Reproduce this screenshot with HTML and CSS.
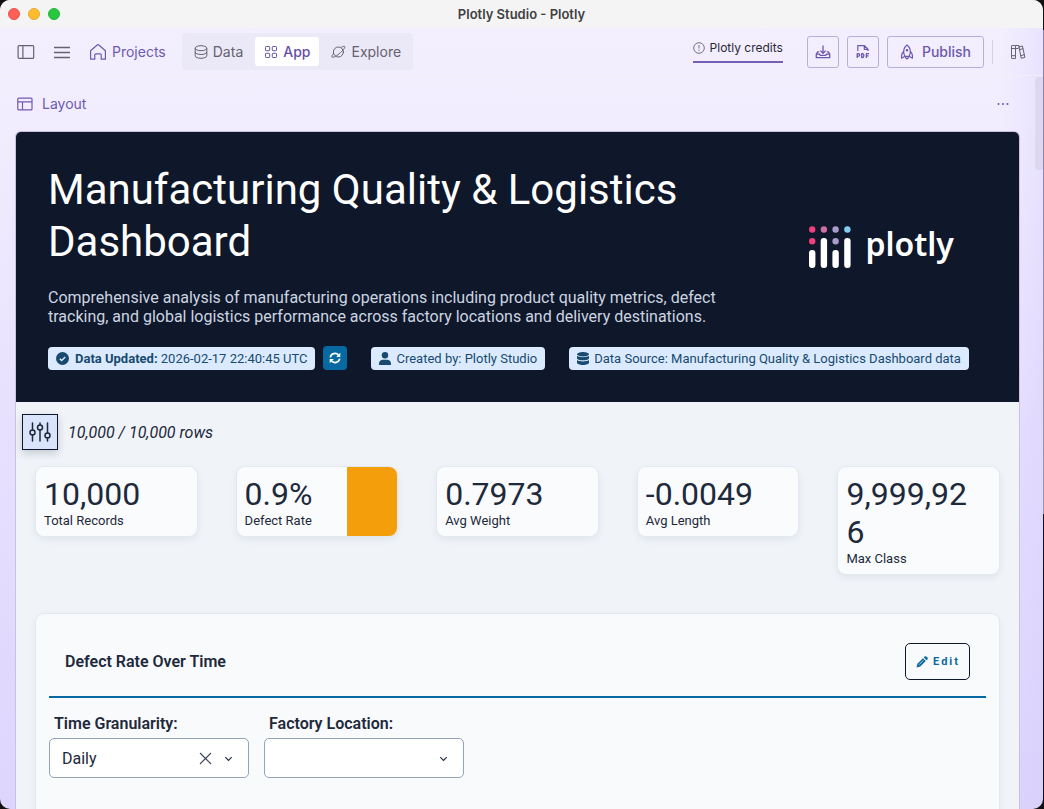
FILE: index.html
```html
<!DOCTYPE html>
<html lang="en">
<head>
<meta charset="utf-8">
<title>Plotly Studio - Plotly</title>
<link rel="stylesheet" href="styles.css">
</head>
<body>
<div class="window">
  <header class="titlebar">
    <div class="lights">
      <span class="light light-close"></span>
      <span class="light light-min"></span>
      <span class="light light-max"></span>
    </div>
    <div class="window-title">Plotly Studio - Plotly</div>
  </header>

  <nav class="toolbar">
    <button class="icon-btn" aria-label="Toggle sidebar">
      <svg width="18" height="16" viewBox="0 0 18 16" fill="none" stroke="currentColor" stroke-width="1.2"><rect x="1.1" y="1.6" width="15.6" height="12.8" rx="1"/><path d="M5.9 1.6v12.8"/></svg>
    </button>
    <button class="icon-btn" aria-label="Menu">
      <svg width="16" height="14" viewBox="0 0 16 14" fill="none" stroke="currentColor" stroke-width="1.6"><path d="M0 2.500h16M0 7.500h16M0 12.500h16"/></svg>
    </button>
    <a class="projects" href="#">
      <svg width="18" height="18" viewBox="0 0 18 18" fill="none" stroke="currentColor" stroke-width="1.2" stroke-linejoin="round" stroke-linecap="round"><path d="M1.600 7.800 8.200 2a1.200 1.200 0 0 1 1.600 0l6.600 5.800v8.400h-4.200v-4.400a1 1 0 0 0-1-1H6.800a1 1 0 0 0-1 1v4.400H1.600z"/></svg>
      Projects
    </a>
    <div class="tabs">
      <button class="tab">
        <svg width="14" height="14" viewBox="0 0 14 14" fill="none" stroke="currentColor" stroke-width="1"><ellipse cx="7" cy="3.200" rx="5.800" ry="2.500"/><path d="M1.200 3.200v7.600c0 1.400 2.600 2.500 5.800 2.500s5.800-1.100 5.800-2.500V3.200M1.200 7c0 1.400 2.600 2.500 5.800 2.500s5.800-1.100 5.800-2.500"/></svg>
        Data
      </button>
      <button class="tab tab-active">
        <svg width="14" height="14" viewBox="0 0 14 14" fill="none" stroke="currentColor" stroke-width="1"><rect x="1.500" y="1.500" width="4.200" height="4.200" rx=".8"/><rect x="8.300" y="1.500" width="4.200" height="4.200" rx=".8"/><rect x="1.500" y="8.300" width="4.200" height="4.200" rx=".8"/><rect x="8.300" y="8.300" width="4.200" height="4.200" rx=".8"/></svg>
        App
      </button>
      <button class="tab">
        <svg width="15" height="14" viewBox="0 0 15 14" fill="none" stroke="currentColor" stroke-width="1" stroke-linecap="round"><circle cx="7.400" cy="7" r="5"/><path d="M2.600 8.300C1.200 10 .4 11.400.9 12c.8 1 4-.6 7.200-3.200s6-6 5.800-7c-.2-.8-1.800-.5-3.300.3"/></svg>
        Explore
      </button>
    </div>
    <div class="toolbar-right">
      <a class="credits" href="#">
        <svg width="12" height="12" viewBox="0 0 12 12" fill="none" stroke="currentColor" stroke-width=".9"><circle cx="6" cy="6" r="5.300"/><path d="M6 3v3.600M6 7.800v1.200"/></svg>
        Plotly credits
      </a>
      <div class="actions">
        <button class="outline-btn square" aria-label="Download">
          <svg width="16" height="16" viewBox="0 0 16 16" fill="none" stroke="currentColor" stroke-width="1.300" stroke-linejoin="round"><path d="M8 1.500v7.600M5.300 6.600 8 9.200l2.700-2.600M4.200 7.800H2.700L1.300 10v3.700h13.400V10l-1.400-2.200h-1.500M1.300 10.200h3.200l.8 1.200h5.400l.8-1.200h3.200"/></svg>
        </button>
        <button class="outline-btn square" aria-label="Export PDF">
          <svg width="14" height="16" viewBox="0 0 14 16" fill="none" stroke="currentColor" stroke-width="1.200" stroke-linejoin="round"><path d="M1.800 7V1.700h6.700L12 5.100V7M8.300 1.700v3.600H12"/><path stroke-width="1.300" d="M1.200 14V9.700h1.200a1.200 1.200 0 0 1 0 2.500H1.200M5.700 9.700v3.800h.8c1.800 0 1.800-3.800 0-3.800zM10.400 14V9.700H13M10.400 11.900h2.100"/></svg>
        </button>
        <button class="outline-btn publish">
          <svg width="14" height="16" viewBox="0 0 14 16" fill="none" stroke="currentColor" stroke-width="1.200" stroke-linejoin="round"><path d="M7 1C4.700 2.700 3.700 5.200 3.700 7.500c0 2 .5 3.600 1.200 4.800h4.200c.7-1.200 1.200-2.800 1.200-4.800C10.300 5.200 9.300 2.700 7 1zM3.700 7.500C2 8.800 1.200 10.500 1.600 14.200l3.300-1.900M10.300 7.500c1.700 1.300 2.500 3 2.100 6.700l-3.300-1.900M5.600 12.300v1.500L7 15l1.400-1.200v-1.500"/><circle cx="7" cy="6.300" r=".7"/></svg>
          Publish
        </button>
      </div>
      <span class="divider"></span>
      <button class="icon-btn" aria-label="Library">
        <svg width="16" height="16" viewBox="0 0 16 16" fill="none" stroke="currentColor" stroke-width="1"><rect x="1.500" y="1.500" width="4" height="13" rx=".6"/><path d="M5.500 4.500V1.500H9v3M5.500 11.700v2.800M5.500 4.500h2.700M9 2.900l3.400-.9 2.500 11.400-3.700.9zM1.500 4.500h4M1.500 11.700h4M9.500 5.600l3.700-.9M10.700 11.600l3.800-.9"/></svg>
      </button>
    </div>
  </nav>

  <main class="workspace">
    <div class="layout-row">
      <button class="layout-btn">
        <svg width="16" height="14" viewBox="0 0 16 14" fill="none" stroke="currentColor" stroke-width="1.200"><rect x=".8" y="1.100" width="14.200" height="11.800" rx="1"/><path d="M.8 4.900H15M5.500 4.900v8"/></svg>
        Layout
      </button>
      <button class="more" aria-label="More options">
        <svg width="12" height="4" viewBox="0 0 12 4" fill="currentColor"><circle cx="1.500" cy="2" r="1"/><circle cx="6" cy="2" r="1"/><circle cx="10.500" cy="2" r="1"/></svg>
      </button>
    </div>

    <section class="app">
      <header class="hero">
        <div class="hero-top">
          <div class="hero-text">
            <h1>Manufacturing Quality &amp; Logistics Dashboard</h1>
            <p>Comprehensive analysis of manufacturing operations including product quality metrics, defect tracking, and global logistics performance across factory locations and delivery destinations.</p>
          </div>
          <div class="logo">
            <svg width="42" height="42" viewBox="0 0 42 42">
              <g fill="#fff"><rect x="0" y="24" width="6.400" height="18" rx="3"/><rect x="11.700" y="12" width="6.400" height="30" rx="3"/><rect x="23.400" y="24" width="6.400" height="18" rx="3"/><rect x="35.200" y="12" width="6.400" height="30" rx="3"/></g>
              <g fill="#ef3f7d"><circle cx="3.200" cy="3.500" r="3.200"/><circle cx="3.200" cy="15.300" r="3.200"/></g>
              <circle cx="14.900" cy="3.500" r="3.200" fill="#cf6da6"/>
              <g fill="#a99bcb"><circle cx="26.600" cy="3.500" r="3.200"/><circle cx="26.600" cy="15.300" r="3.200"/></g>
              <circle cx="38.400" cy="3.500" r="3.200" fill="#83cdf0"/>
            </svg>
            <span>plotly</span>
          </div>
        </div>
        <div class="badges">
          <div class="badge-group">
            <span class="badge">
              <svg width="14" height="13" viewBox="0 0 14 13"><circle cx="6.500" cy="6.500" r="6.500" fill="currentColor"/><path d="m3.800 6.700 1.900 1.900 3.500-3.700" fill="none" stroke="#dbeafe" stroke-width="1.400"/></svg>
              <span><strong>Data Updated:</strong> 2026-02-17 22:40:45 UTC</span>
            </span>
            <button class="refresh" aria-label="Refresh data">
              <svg width="12" height="12" viewBox="0 0 12 12" fill="none" stroke="#fff" stroke-width="1.700"><path d="M1.300 5.300a4.700 4.700 0 0 1 8.300-2.100M10.700 6.700a4.700 4.700 0 0 1-8.300 2.100"/><path d="M11.300.8v4.100H7.200zM.7 11.200V7.100h4.100z" fill="#fff" stroke="none"/></svg>
            </button>
          </div>
          <span class="badge">
            <svg width="12" height="13" viewBox="0 0 12 13" fill="currentColor"><circle cx="6" cy="3.300" r="3.200"/><path d="M0 13v-1.500C0 9 1.800 7.700 4 7.700h4c2.200 0 4 1.300 4 3.800V13z"/></svg>
            Created by: Plotly Studio
          </span>
          <span class="badge">
            <svg width="12" height="13" viewBox="0 0 12 13" fill="currentColor"><ellipse cx="6" cy="2.200" rx="6" ry="2.200"/><path d="M0 3.800c1.200 1 3.500 1.400 6 1.400s4.800-.4 6-1.400v2.400c0 1.200-2.700 2.100-6 2.100S0 7.400 0 6.200zM0 8c1.200 1 3.500 1.400 6 1.400S10.800 9 12 8v2.800C12 12 9.300 13 6 13s-6-1-6-2.200z"/></svg>
            Data Source: Manufacturing Quality &amp; Logistics Dashboard data
          </span>
        </div>
      </header>

      <div class="filter-row">
        <button class="filter-btn" aria-label="Filters">
          <svg width="22" height="20" viewBox="0 0 22 20" fill="none" stroke="currentColor" stroke-width="1.500" stroke-linecap="round"><path d="M3.500 1v7M3.500 13v6M11 1v2M11 8v11M18.500 1v10M18.500 16v3"/><circle cx="3.500" cy="10.500" r="2.500"/><circle cx="11" cy="5.500" r="2.500"/><circle cx="18.500" cy="13.500" r="2.500"/></svg>
        </button>
        <em>10,000 / 10,000 rows</em>
      </div>

      <div class="kpis">
        <article class="kpi"><div class="kpi-body"><div class="value">10,000</div><div class="label">Total Records</div></div></article>
        <article class="kpi"><div class="kpi-body"><div class="value">0.9%</div><div class="label">Defect Rate</div></div><div class="flag"></div></article>
        <article class="kpi"><div class="kpi-body"><div class="value">0.7973</div><div class="label">Avg Weight</div></div></article>
        <article class="kpi"><div class="kpi-body"><div class="value">-0.0049</div><div class="label">Avg Length</div></div></article>
        <article class="kpi"><div class="kpi-body"><div class="value">9,999,926</div><div class="label">Max Class</div></div></article>
      </div>

      <section class="chart-card">
        <header class="chart-head">
          <h2>Defect Rate Over Time</h2>
          <button class="edit">
            <svg width="12" height="12" viewBox="0 0 12 12" fill="currentColor"><path d="M7 2.200 9.800 5l-5.600 5.600L.5 11.500l.9-3.700zM7.800 1.400l.8-.8a1.300 1.300 0 0 1 1.800 0l1 1a1.300 1.300 0 0 1 0 1.800l-.8.8z"/><path d="m3 8.700 4.300-4.300" stroke="#f8fafc" stroke-width=".7"/></svg>
            Edit
          </button>
        </header>
        <div class="controls">
          <div class="field">
            <label for="granularity">Time Granularity:</label>
            <div class="select-wrap">
              <select id="granularity"><option>Daily</option></select>
              <button class="clear" aria-label="Clear selection"><svg width="13" height="13" viewBox="0 0 13 13" fill="none" stroke="currentColor" stroke-width="1.100"><path d="m1 1 11 11M12 1 1 12"/></svg></button>
              <svg class="chevron" width="9" height="6" viewBox="0 0 9 6" fill="none" stroke="currentColor" stroke-width="1.100"><path d="m1.300 1.200 3.200 3.200 3.200-3.200"/></svg>
            </div>
          </div>
          <div class="field">
            <label for="location">Factory Location:</label>
            <div class="select-wrap">
              <select id="location"><option></option></select>
              <svg class="chevron" width="9" height="6" viewBox="0 0 9 6" fill="none" stroke="currentColor" stroke-width="1.100"><path d="m1.300 1.200 3.200 3.200 3.200-3.200"/></svg>
            </div>
          </div>
        </div>
      </section>
    </section>
    <div class="scroll-thumb"></div>
  </main>
</div>
</body>
</html>
```
FILE: styles.css
```css
* { box-sizing: border-box; }

body {
  margin: 0;
  padding-right: 1px;
  background: linear-gradient(#111 0 30px, #8d7fae 30px, #9a96a6 514px, #111 514px);
  font-family: Roboto, "Liberation Sans", sans-serif;
  color: #1e293b;
}

button {
  margin: 0;
  padding: 0;
  border: 0;
  background: none;
  font: inherit;
  color: inherit;
}

a { color: inherit; text-decoration: none; }
svg { display: block; flex: none; }

.window {
  display: flex;
  flex-direction: column;
  height: 100vh;
  overflow: hidden;
  border-radius: 10px;
  background:
    linear-gradient(to right, transparent 96%, rgba(205, 195, 255, 0.25)),
    linear-gradient(#f3effe 0, #f1edfe 130px, #e8e1fe 400px, #ddd5fd 100%);
}

.titlebar {
  display: grid;
  grid-template-columns: 1fr auto 1fr;
  align-items: center;
  flex: none;
  height: 28px;
  padding: 0 8px;
  background: #f5f4f4;
}

.lights { display: flex; gap: 8px; }
.light { width: 12px; height: 12px; border-radius: 50%; }
.light-close { background: #fe5f57; border: 1px solid #e8524c; }
.light-min { background: #febc2e; border: 1px solid #e6a935; }
.light-max { background: #27c840; border: 1px solid #24b23b; }

.window-title {
  font: 600 13px/16px Inter, sans-serif;
  color: #3f3f41;
}

.toolbar {
  display: flex;
  align-items: center;
  flex: none;
  gap: 19px;
  height: 48px;
  padding: 0 17px;
  border-bottom: 1px solid #f3edf6;
  font: 400 14px/20px Inter, sans-serif;
  color: #66626f;
}

.projects {
  display: flex;
  align-items: center;
  gap: 5px;
  color: #6e5aaf;
}

.tabs {
  display: flex;
  margin-left: -3px;
  padding: 4px;
  border-radius: 4px;
  background: #ebe8f7;
}

.tab {
  display: flex;
  align-items: center;
  gap: 5px;
  height: 29px;
  padding: 0 8px;
  border-radius: 3px;
}
.tab:first-child { padding-right: 12px; }
.tab:last-child { padding-left: 12px; }
.tab-active { padding: 0 9px; font-weight: 500; color: #6450a8; background: #fff; }

.toolbar-right {
  display: flex;
  align-items: center;
  margin-left: auto;
}

.credits {
  display: flex;
  align-items: center;
  gap: 5px;
  margin: 0 24px 2px 0;
  padding-bottom: 3px;
  border-bottom: 2px solid #7460b5;
  font-size: 12px;
  line-height: 20px;
  color: #2b2833;
}
.credits svg { color: #66626f; }

.actions { display: flex; gap: 8px; }

.outline-btn {
  display: flex;
  align-items: center;
  justify-content: center;
  height: 32px;
  border: 1px solid #b9add9;
  border-radius: 3px;
  font-weight: 500;
  color: #6c58ae;
}
.square { width: 32px; }
.publish { gap: 8px; padding: 0 12px; }

.divider {
  width: 1px;
  height: 24px;
  margin: 0 17px 0 8px;
  background: #d5d0e0;
}

.workspace {
  position: relative;
  flex: 1;
  min-height: 0;
  padding: 0 24px 0 16px;
  overflow: hidden;
}

.layout-row {
  display: flex;
  align-items: center;
  justify-content: space-between;
  height: 56px;
  padding: 0 10px 0 1px;
  color: #6e5aaf;
}
.layout-btn {
  display: flex;
  align-items: center;
  gap: 9px;
  font: 400 14px/20px Inter, sans-serif;
}

.app {
  min-height: 100%;
  border-radius: 5px 5px 0 0;
  background: #f0f4f9;
  box-shadow: 0 0 0 1px #c9c0e2;
}

.hero {
  padding: 32px;
  border-radius: 5px 5px 0 0;
  background: #0f172a;
}

.hero-top {
  display: grid;
  grid-template-columns: 3fr 1fr;
  align-items: center;
}

h1 {
  margin: 0 0 20px;
  font-size: 42px;
  line-height: 52px;
  font-weight: 400;
  color: #fff;
}

.hero p {
  margin: 0;
  font-size: 16px;
  line-height: 19px;
  color: #cbd5e1;
}

.logo {
  display: flex;
  align-items: flex-start;
  justify-content: center;
  gap: 14px;
  padding: 4px 0 0 24px;
  font: 600 32px/36px "Noto Sans", sans-serif;
  color: #fff;
}

.badges {
  display: flex;
  align-items: center;
  gap: 24px;
  margin-top: 20px;
}
.badge-group { display: flex; align-items: center; gap: 8px; }

.badge {
  display: flex;
  align-items: center;
  gap: 5px;
  height: 23px;
  padding: 0 8px;
  border-radius: 4px;
  background: #dbeafe;
  font-size: 13px;
  white-space: nowrap;
  color: #174a6e;
}

.refresh {
  display: grid;
  place-items: center;
  width: 24px;
  height: 24px;
  border-radius: 4px;
  background: #0769a1;
}

.filter-row {
  display: flex;
  align-items: center;
  gap: 10px;
  padding: 12px 6px 0;
  font-size: 16px;
}

.filter-btn {
  display: grid;
  place-items: center;
  width: 36px;
  height: 36px;
  border: 1px solid #0f172a;
  background: #d9e3f9;
  box-shadow: 0 3px 8px rgba(15, 23, 42, 0.2);
}

.kpis {
  display: grid;
  grid-template-columns: repeat(5, minmax(0, 1fr));
  align-items: start;
  gap: 40px;
  padding: 17px 20px 0;
}

.kpi {
  display: flex;
  overflow: hidden;
  border-radius: 8px;
  background: #f9fbfc;
  box-shadow: 0 0 0 1px #e3e9f1, 0 3px 8px rgba(15, 23, 42, 0.08);
}
.kpi-body {
  flex: 1;
  min-width: 0;
  padding: 8px 24px 8px 8px;
}
.kpi:has(.flag) .kpi-body { padding-right: 0; }
.flag { flex: none; width: 50px; background: #f59e0b; }
.value {
  font-size: 32px;
  line-height: 38px;
  overflow-wrap: anywhere;
}
.label { font-size: 13px; line-height: 15px; }

.chart-card {
  min-height: 320px;
  margin: 40px 20px 0;
  padding: 13px;
  border-radius: 8px;
  background: #f9fafc;
  box-shadow: 0 0 0 1px #e3e9f1, 0 3px 8px rgba(15, 23, 42, 0.06);
}

.chart-head {
  display: flex;
  align-items: center;
  justify-content: space-between;
  padding: 16px;
  border-bottom: 2px solid #0769a1;
}

h2 {
  margin: 0;
  font-size: 16px;
  line-height: 20px;
  font-weight: 600;
}

.edit {
  display: flex;
  align-items: center;
  gap: 5px;
  height: 37px;
  padding: 0 9px 0 10px;
  border: 1px solid #0f172a;
  border-radius: 5px;
  font-size: 11px;
  font-weight: 700;
  letter-spacing: 2px;
  color: #0769a1;
}

.controls { display: flex; gap: 15px; padding-top: 16px; }
.field { width: 200px; }
.field label {
  display: block;
  margin: 0 5px 5px;
  font-size: 16px;
  line-height: 19px;
  font-weight: 600;
}

.select-wrap { position: relative; }
select {
  appearance: none;
  width: 100%;
  height: 40px;
  padding: 2px 12px 0;
  border: 1px solid #94a3b8;
  border-radius: 5px;
  background: #fff;
  font: 400 16px/20px Roboto, sans-serif;
  color: #1e293b;
}
.clear { position: absolute; top: 14px; right: 37px; color: #3c4656; }
.chevron { position: absolute; top: 18px; right: 16px; pointer-events: none; }

.scroll-thumb {
  position: absolute;
  top: 1px;
  right: 0;
  width: 8px;
  height: 93px;
  border-radius: 4px 0 0 4px;
  background: #ddd7ef;
}
```
